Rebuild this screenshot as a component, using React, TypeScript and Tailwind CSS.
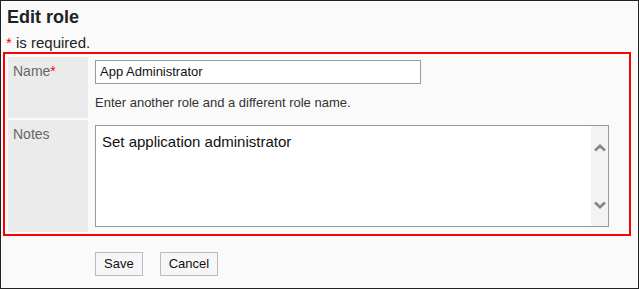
const Chevron = ({ down = false }: { down?: boolean }) => (
  <svg width="12" height="8" viewBox="0 0 12 8" className="block">
    <polyline
      points={down ? "1,1.5 6,6 11,1.5" : "1,6.5 6,2 11,6.5"}
      fill="none"
      stroke="#888"
      strokeWidth="2.8"
    />
  </svg>
);

export default function App() {
  return (
    <div className="w-[639px] h-[289px] border border-[#222] bg-[#fafafa] font-['Liberation_Sans',Arial,sans-serif] text-[#333] overflow-hidden">
      <h1 className="pl-[6px] pt-[5px] text-[18px] leading-[22px] font-bold text-[#222]">Edit role</h1>
      <p className="mt-[6px] pl-[5px] text-[15px] leading-[18px] text-[#222]">
        <span className="text-[#f00]">*</span> is required.
      </p>

      {/* highlighted form block */}
      <div className="ml-[2px] w-[628px] border-2 border-[#f00] pt-[3px] pl-[3px] pb-[2px]">
        <div className="grid grid-cols-[80px_1fr] gap-[2px]">
          <div className="h-[61px] bg-[#ebebeb] pl-[5px] pt-[6px] text-[14px] leading-[16px] text-[#666]">
            Name<span className="text-[#f00]">*</span>
          </div>
          <div className="h-[61px] pl-[5px] pt-[3px]">
            <div className="w-[326px] h-[24px] border border-[#999] bg-white pl-[4px] text-[13px] leading-[22px] text-[#111]">
              App Administrator
            </div>
            <p className="mt-[11px] text-[13px] leading-[16px] text-[#333]">
              Enter another role and a different role name.
            </p>
          </div>

          <div className="h-[112px] bg-[#ebebeb] pl-[5px] pt-[6px] text-[14px] leading-[16px] text-[#666]">
            Notes
          </div>
          <div className="h-[112px] pl-[5px] pt-[5px]">
            <div className="flex w-[514px] h-[102px] border border-[#999] bg-white">
              <div className="flex-1 pl-[6px] pt-[7px] text-[15px] leading-[17px] text-[#111]">
                Set application administrator
              </div>
              <div className="w-[17px] bg-[#f3f3f3] flex flex-col items-center justify-between pt-[18px] pb-[17px]">
                <Chevron />
                <Chevron down />
              </div>
            </div>
          </div>
        </div>
      </div>

      <div className="mt-[16px] ml-[94px] flex gap-[17px]">
        <button className="h-[24px] px-[8px] border border-[#bbb] bg-[#f6f6f6] text-[13px] leading-[22px] text-[#111]">
          Save
        </button>
        <button className="h-[24px] px-[8px] border border-[#bbb] bg-[#f6f6f6] text-[13px] leading-[22px] text-[#111]">
          Cancel
        </button>
      </div>
    </div>
  );
}
